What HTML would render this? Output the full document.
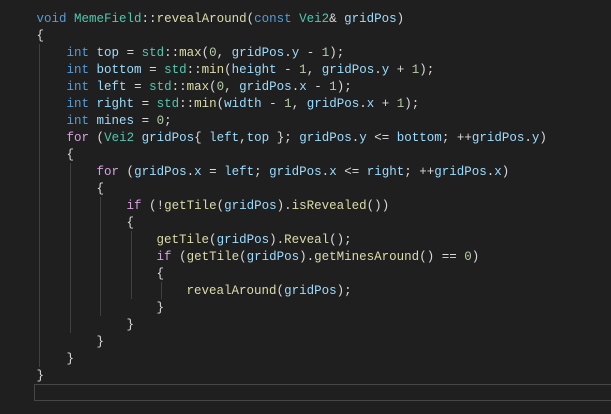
<!DOCTYPE html>
<html><head><meta charset="utf-8"><style>
html,body{margin:0;padding:0;background:#1f1f1f;width:611px;height:414px;overflow:hidden;}
pre{position:absolute;left:36.5px;top:10.5px;margin:0;font-family:"Liberation Mono",monospace;font-size:12.5px;line-height:17px;color:#dadada;white-space:pre;}
.k{color:#569cd6}.t{color:#4ec9b0}.f{color:#dcdcaa}.v{color:#9cdcfe}.n{color:#b5cea8}.c{color:#d8a0df}
.b1,.b2,.b3{color:#dadada}
.g{position:absolute;width:1px;background:#404040}
.box{position:absolute;left:34px;top:384px;width:590px;height:15px;border:1px solid #464646}
</style></head><body>
<div class="g" style="left:39px;top:44px;height:323px"></div>
<div class="g" style="left:70px;top:163px;height:170px"></div>
<div class="g" style="left:100px;top:197px;height:119px"></div>
<div class="g" style="left:131px;top:231px;height:68px"></div>
<div class="g" style="left:161px;top:282px;height:17px"></div>
<div class="box"></div>
<pre><span class="k">void</span> <span class="t">MemeField</span>::<span class="f">revealAround</span><span class="b1">(</span><span class="k">const</span> <span class="t">Vei2</span>&amp; <span class="v">gridPos</span><span class="b1">)</span>
<span class="b1">{</span>
    <span class="k">int</span> <span class="v">top</span> = <span class="t">std</span>::<span class="f">max</span><span class="b2">(</span><span class="n">0</span>, <span class="v">gridPos</span>.<span class="v">y</span> - <span class="n">1</span><span class="b2">)</span>;
    <span class="k">int</span> <span class="v">bottom</span> = <span class="t">std</span>::<span class="f">min</span><span class="b2">(</span><span class="v">height</span> - <span class="n">1</span>, <span class="v">gridPos</span>.<span class="v">y</span> + <span class="n">1</span><span class="b2">)</span>;
    <span class="k">int</span> <span class="v">left</span> = <span class="t">std</span>::<span class="f">max</span><span class="b2">(</span><span class="n">0</span>, <span class="v">gridPos</span>.<span class="v">x</span> - <span class="n">1</span><span class="b2">)</span>;
    <span class="k">int</span> <span class="v">right</span> = <span class="t">std</span>::<span class="f">min</span><span class="b2">(</span><span class="v">width</span> - <span class="n">1</span>, <span class="v">gridPos</span>.<span class="v">x</span> + <span class="n">1</span><span class="b2">)</span>;
    <span class="k">int</span> <span class="v">mines</span> = <span class="n">0</span>;
    <span class="c">for</span> <span class="b2">(</span><span class="t">Vei2</span> <span class="v">gridPos</span><span class="b3">{</span> <span class="v">left</span>,<span class="v">top</span> <span class="b3">}</span>; <span class="v">gridPos</span>.<span class="v">y</span> &lt;= <span class="v">bottom</span>; ++<span class="v">gridPos</span>.<span class="v">y</span><span class="b2">)</span>
    <span class="b2">{</span>
        <span class="c">for</span> <span class="b3">(</span><span class="v">gridPos</span>.<span class="v">x</span> = <span class="v">left</span>; <span class="v">gridPos</span>.<span class="v">x</span> &lt;= <span class="v">right</span>; ++<span class="v">gridPos</span>.<span class="v">x</span><span class="b3">)</span>
        <span class="b3">{</span>
            <span class="c">if</span> <span class="b1">(</span>!<span class="f">getTile</span><span class="b2">(</span><span class="v">gridPos</span><span class="b2">)</span>.<span class="f">isRevealed</span><span class="b2">()</span><span class="b1">)</span>
            <span class="b1">{</span>
                <span class="f">getTile</span><span class="b2">(</span><span class="v">gridPos</span><span class="b2">)</span>.<span class="f">Reveal</span><span class="b2">()</span>;
                <span class="c">if</span> <span class="b2">(</span><span class="f">getTile</span><span class="b3">(</span><span class="v">gridPos</span><span class="b3">)</span>.<span class="f">getMinesAround</span><span class="b3">()</span> == <span class="n">0</span><span class="b2">)</span>
                <span class="b2">{</span>
                    <span class="f">revealAround</span><span class="b3">(</span><span class="v">gridPos</span><span class="b3">)</span>;
                <span class="b2">}</span>
            <span class="b1">}</span>
        <span class="b3">}</span>
    <span class="b2">}</span>
<span class="b1">}</span>
</pre>
</body></html>
